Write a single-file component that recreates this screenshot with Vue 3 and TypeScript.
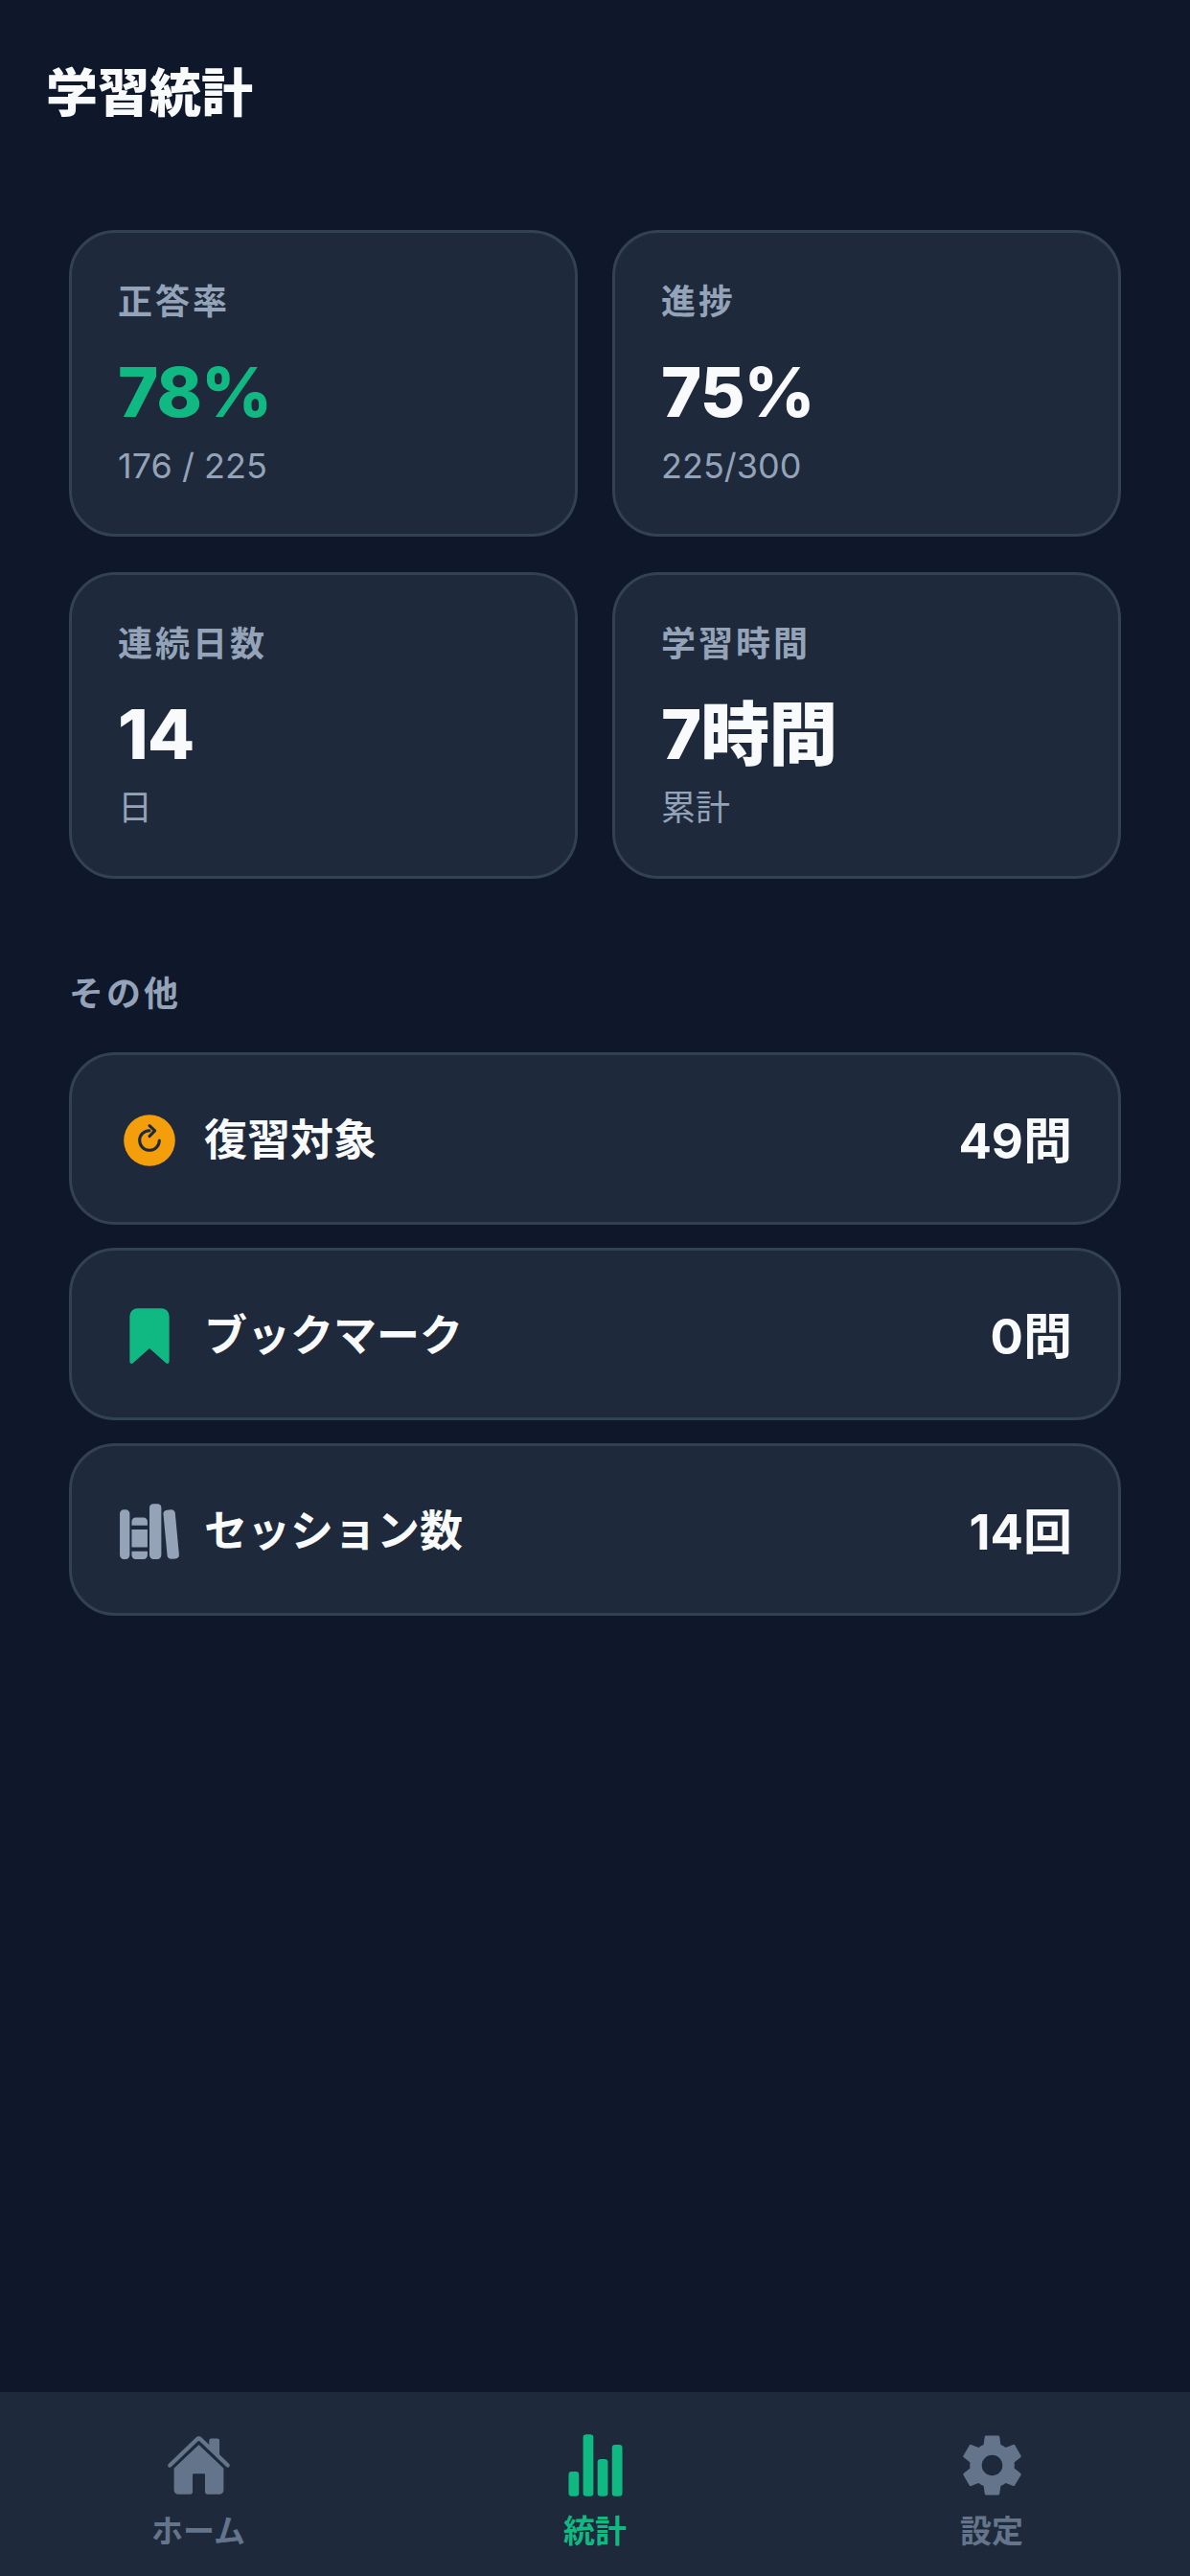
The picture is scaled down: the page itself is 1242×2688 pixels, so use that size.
<script setup lang="ts">
const cards = [
  { label: '正答率', value: '78%', sub: '176 / 225', accent: true },
  { label: '進捗', value: '75%', sub: '225/300', accent: false },
  { label: '連続日数', value: '14', sub: '日', accent: false },
  { label: '学習時間', value: '7時間', sub: '累計', accent: false },
]

const rows = [
  { icon: 'refresh', label: '復習対象', value: '49問' },
  { icon: 'bookmark', label: 'ブックマーク', value: '0問' },
  { icon: 'library', label: 'セッション数', value: '14回' },
]

const tabs = [
  { icon: 'home', label: 'ホーム', active: false },
  { icon: 'stats', label: '統計', active: true },
  { icon: 'settings', label: '設定', active: false },
]
</script>

<template>
  <div class="screen">
    <header class="header">
      <h1>学習統計</h1>
    </header>

    <main class="content">
      <section class="grid">
        <div v-for="card in cards" :key="card.label" class="card">
          <div class="card-label">{{ card.label }}</div>
          <div class="card-value" :class="{ accent: card.accent }">{{ card.value }}</div>
          <div class="card-sub">{{ card.sub }}</div>
        </div>
      </section>

      <h2 class="section-title">その他</h2>

      <section class="list">
        <div v-for="row in rows" :key="row.label" class="row">
          <div class="row-left">
            <svg class="row-icon" viewBox="0 0 512 512">
              <template v-if="row.icon === 'refresh'">
                <circle cx="256" cy="256" r="208" fill="#f59e0b" />
                <path d="M336 256A80 80 0 1 1 256 176" fill="none" stroke="#1e293b" stroke-width="24" stroke-linecap="round" />
                <path d="M256 136l44 42-44 44" fill="none" stroke="#1e293b" stroke-width="24" stroke-linecap="round" stroke-linejoin="round" />
              </template>
              <path
                v-else-if="row.icon === 'bookmark'"
                fill="#10b981"
                d="M400 480a16 16 0 01-10.63-4L256 357.41 122.63 476A16 16 0 0196 464V96a64.07 64.07 0 0164-64h192a64.07 64.07 0 0164 64v368a16 16 0 01-16 16z"
              />
              <g v-else fill="#94a3b8">
                <path d="M64 480H48a32 32 0 01-32-32V112a32 32 0 0132-32h16a32 32 0 0132 32v336a32 32 0 01-32 32zM240 176a32 32 0 00-32-32h-64a32 32 0 00-32 32v28a4 4 0 004 4h120a4 4 0 004-4zM112 448a32 32 0 0032 32h64a32 32 0 0032-32v-30a2 2 0 00-2-2H114a2 2 0 00-2 2z" />
                <rect x="112" y="240" width="128" height="144" rx="2" ry="2" />
                <path d="M320 480h-32a32 32 0 01-32-32V64a32 32 0 0132-32h32a32 32 0 0132 32v384a32 32 0 01-32 32zM495.89 445.45l-32.23-340c-1.48-15.65-16.94-27-34.53-25.31l-31.85 3c-17.59 1.67-30.65 15.71-29.17 31.36l32.23 340c1.48 15.65 16.94 27 34.53 25.31l31.85-3c17.59-1.67 30.65-15.71 29.17-31.36z" />
              </g>
            </svg>
            <span class="row-label">{{ row.label }}</span>
          </div>
          <span class="row-value">{{ row.value }}</span>
        </div>
      </section>
    </main>

    <nav class="tabbar">
      <div v-for="tab in tabs" :key="tab.label" class="tab" :class="{ active: tab.active }">
        <svg class="tab-icon" viewBox="0 0 512 512" fill="currentColor">
          <template v-if="tab.icon === 'home'">
            <path d="M261.56 101.28a8 8 0 00-11.06 0L66.4 277.15a8 8 0 00-2.47 5.79L63.9 448a32 32 0 0032 32H192a16 16 0 0016-16V328a8 8 0 018-8h80a8 8 0 018 8v136a16 16 0 0016 16h96.06a32 32 0 0032-32V282.94a8 8 0 00-2.47-5.79z" />
            <path d="M490.91 244.15l-74.8-71.56V64a16 16 0 00-16-16h-48a16 16 0 00-16 16v32l-57.92-55.38C272.77 35.14 264.71 32 256 32c-8.68 0-16.7 3.14-22.14 8.63l-212.7 203.5c-6.22 6-7 15.87-1.34 22.37A16 16 0 0043 267.56L250.5 69.28a8 8 0 0111.06 0l207.52 198.28a16 16 0 0022.59-.44c6.14-6.36 5.63-16.86-.76-22.97z" />
          </template>
          <path
            v-else-if="tab.icon === 'stats'"
            d="M104 496H72a24 24 0 01-24-24V328a24 24 0 0124-24h32a24 24 0 0124 24v144a24 24 0 01-24 24zM328 496h-32a24 24 0 01-24-24V232a24 24 0 0124-24h32a24 24 0 0124 24v240a24 24 0 01-24 24zM440 496h-32a24 24 0 01-24-24V120a24 24 0 0124-24h32a24 24 0 0124 24v352a24 24 0 01-24 24zM216 496h-32a24 24 0 01-24-24V40a24 24 0 0124-24h32a24 24 0 0124 24v432a24 24 0 01-24 24z"
          />
          <path
            v-else
            d="M256 176a80 80 0 1080 80 80.09 80.09 0 00-80-80zm172.72 80a165.53 165.53 0 01-1.64 22.34l48.69 38.12a11.59 11.59 0 012.63 14.78l-46.06 79.52a11.64 11.64 0 01-14.14 4.93l-57.25-23a176.56 176.56 0 01-38.82 22.67l-8.56 60.77a11.69 11.69 0 01-11.51 9.87h-92.12a12 12 0 01-11.51-9.53l-8.56-60.78A169.3 169.3 0 01151.05 393L93.8 416a11.64 11.64 0 01-14.14-4.92L33.6 331.57a11.59 11.59 0 012.63-14.78l48.69-38.12A174.58 174.58 0 0183.28 256a165.53 165.53 0 011.64-22.34l-48.69-38.12a11.59 11.59 0 01-2.63-14.78l46.06-79.52a11.64 11.64 0 0114.14-4.93l57.25 23a176.56 176.56 0 0138.82-22.67l8.56-60.77A11.69 11.69 0 01209.94 26h92.12a12 12 0 0111.51 9.53l8.56 60.78A169.3 169.3 0 01361 119l57.2-23a11.64 11.64 0 0114.14 4.92l46.06 79.52a11.59 11.59 0 01-2.63 14.78l-48.69 38.12a174.58 174.58 0 011.64 22.66z"
          />
        </svg>
        <span class="tab-label">{{ tab.label }}</span>
      </div>
    </nav>
  </div>
</template>

<style>
body {
  background: #0f172a;
}
</style>

<style scoped>
.screen {
  display: flex;
  flex-direction: column;
  height: 2688px;
  background: #0f172a;
  color: #f8fafc;
  font-family: Inter, "Noto Sans CJK JP", sans-serif;
}

.header {
  padding: 62px 48px 0;
}

h1 {
  margin: 0;
  font-size: 54px;
  line-height: 72px;
  font-weight: 800;
}

.content {
  padding: 106px 72px 0;
}

.grid {
  display: grid;
  grid-template-columns: 1fr 1fr;
  gap: 37px 36px;
}

.card {
  height: 320px;
  box-sizing: border-box;
  padding: 48px;
  background: #1e293b;
  border: 3px solid #334155;
  border-radius: 48px;
}

.card-label {
  padding-top: 2px;
  font-size: 36px;
  line-height: 44px;
  font-weight: 600;
  letter-spacing: 3px;
  color: #94a3b8;
}

.card-value {
  margin-top: 21px;
  font-size: 72px;
  line-height: 102px;
  font-weight: 800;
  letter-spacing: -1px;
}

.card-value.accent {
  color: #10b981;
}

.card-sub {
  margin-top: 2px;
  font-size: 36px;
  line-height: 48px;
  color: #94a3b8;
}

.section-title {
  margin: 98px 0 39px;
  font-size: 36px;
  line-height: 44px;
  font-weight: 600;
  letter-spacing: 3px;
  color: #94a3b8;
}

.list {
  display: flex;
  flex-direction: column;
  gap: 24px;
}

.row {
  display: flex;
  align-items: center;
  justify-content: space-between;
  height: 180px;
  box-sizing: border-box;
  padding: 0 48px;
  background: #1e293b;
  border: 3px solid #334155;
  border-radius: 48px;
}

.row-left {
  display: flex;
  align-items: center;
  gap: 24px;
}

.row-icon {
  width: 66px;
  height: 66px;
  margin-top: 3px;
}

.row-label {
  margin-bottom: 3px;
  font-size: 45px;
  font-weight: 600;
}

.row-value {
  margin-bottom: 3px;
  font-size: 51px;
  font-weight: 700;
}

.tabbar {
  display: grid;
  grid-template-columns: repeat(3, 1fr);
  height: 192px;
  box-sizing: border-box;
  margin-top: auto;
  padding-top: 42px;
  background: #1e293b;
}

.tab {
  display: flex;
  flex-direction: column;
  align-items: center;
  color: #64748b;
}

.tab.active {
  color: #10b981;
}

.tab-icon {
  width: 69px;
  height: 69px;
}

.tab-label {
  margin-top: 13px;
  font-size: 33px;
  line-height: 42px;
  font-weight: 600;
}
</style>
